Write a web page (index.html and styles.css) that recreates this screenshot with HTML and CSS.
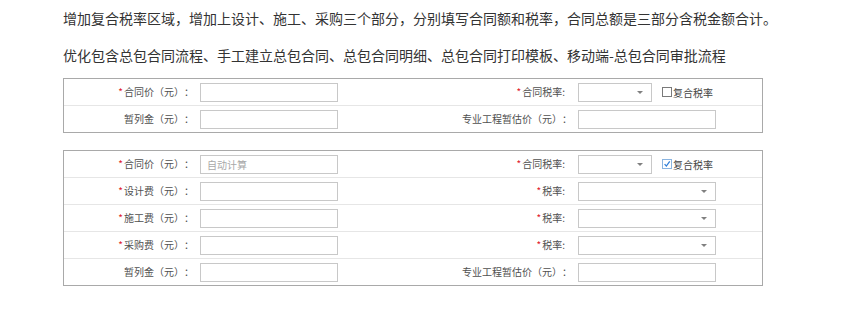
FILE: index.html
```html
<!DOCTYPE html>
<html lang="zh-CN">
<head>
<meta charset="utf-8">
<link rel="stylesheet" href="styles.css">
</head>
<body>
<div class="page">
  <p class="note">增加复合税率区域，增加上设计、施工、采购三个部分，分别填写合同额和税率，合同总额是三部分含税金额合计。</p>
  <p class="note">优化包含总包合同流程、手工建立总包合同、总包合同明细、总包合同打印模板、移动端-总包合同审批流程</p>

  <div class="form">
    <div class="row">
      <div class="label"><span class="req">*</span>合同价（元）：</div>
      <div class="field"><span class="input"></span></div>
      <div class="label half"><span class="req">*</span>合同税率:</div>
      <div class="field"><span class="select small"><span class="arrow"></span></span><span class="check"></span><span class="check-text">复合税率</span></div>
    </div>
    <div class="row">
      <div class="label">暂列金（元）：</div>
      <div class="field"><span class="input"></span></div>
      <div class="label">专业工程暂估价（元）：</div>
      <div class="field"><span class="input"></span></div>
    </div>
  </div>

  <div class="form">
    <div class="row">
      <div class="label"><span class="req">*</span>合同价（元）：</div>
      <div class="field"><span class="input placeholder">自动计算</span></div>
      <div class="label half"><span class="req">*</span>合同税率:</div>
      <div class="field"><span class="select small"><span class="arrow"></span></span><span class="check checked"><svg viewBox="0 0 10 10" width="10" height="10"><path d="M2 5.2 L4.2 7.6 L8.4 1.8" fill="none" stroke="#2f7fd8" stroke-width="1.6"/></svg></span><span class="check-text">复合税率</span></div>
    </div>
    <div class="row">
      <div class="label"><span class="req">*</span>设计费（元）：</div>
      <div class="field"><span class="input"></span></div>
      <div class="label half"><span class="req">*</span>税率:</div>
      <div class="field"><span class="select"><span class="arrow"></span></span></div>
    </div>
    <div class="row">
      <div class="label"><span class="req">*</span>施工费（元）：</div>
      <div class="field"><span class="input"></span></div>
      <div class="label half"><span class="req">*</span>税率:</div>
      <div class="field"><span class="select"><span class="arrow"></span></span></div>
    </div>
    <div class="row">
      <div class="label"><span class="req">*</span>采购费（元）：</div>
      <div class="field"><span class="input"></span></div>
      <div class="label half"><span class="req">*</span>税率:</div>
      <div class="field"><span class="select"><span class="arrow"></span></span></div>
    </div>
    <div class="row">
      <div class="label">暂列金（元）：</div>
      <div class="field"><span class="input"></span></div>
      <div class="label">专业工程暂估价（元）：</div>
      <div class="field"><span class="input"></span></div>
    </div>
  </div>
</div>
</body>
</html>
```

FILE: styles.css
```css
html, body {
  margin: 0;
  padding: 0;
  background: #ffffff;
}
body {
  font-family: "Noto Sans CJK SC", "Noto Sans", sans-serif;
  color: #333333;
  text-spacing-trim: space-all;
}
.page {
  padding: 8px 0 0 63px;
  width: 700px;
}
.note {
  margin: 0 0 17px 0;
  font-size: 14px;
  line-height: 20px;
  color: #333333;
  white-space: nowrap;
}
.note + .note {
  margin-bottom: 13px;
}
.form {
  border: 1px solid #a9a9a9;
  margin-bottom: 17px;
}
.row {
  display: grid;
  grid-template-columns: 136px 140px 238px 1fr;
  height: 26px;
  align-items: center;
  border-top: 1px solid #e6e6e6;
  font-size: 10px;
  color: #505050;
}
.row:first-child {
  border-top: none;
}
.label {
  text-align: right;
  padding-right: 6px;
  white-space: nowrap;
  line-height: 14px;
}
.label.half {
  padding-right: 13px;
}
.req {
  color: #e0202a;
  margin-right: 1px;
}
.field {
  display: flex;
  align-items: center;
}
.input, .select {
  box-sizing: border-box;
  display: flex;
  align-items: center;
  width: 138px;
  height: 19px;
  border: 1px solid #c8c8c8;
  background: #ffffff;
}
.placeholder {
  color: #a8a8a8;
  padding-left: 6px;
  font-size: 10px;
}
.select {
  justify-content: flex-end;
  padding-right: 8px;
}
.select.small {
  width: 74px;
}
.arrow {
  width: 0;
  height: 0;
  border-left: 3px solid transparent;
  border-right: 3px solid transparent;
  border-top: 3px solid #808080;
  margin-top: 1px;
}
.check {
  box-sizing: border-box;
  width: 10px;
  height: 10px;
  border: 1px solid #7a7a7a;
  margin-left: 10px;
  display: flex;
  align-items: center;
  justify-content: center;
}
.check.checked {
  border-color: #8ab4e0;
}
.check svg {
  display: block;
  width: 8px;
  height: 8px;
}
.check-text {
  color: #444444;
  font-size: 10px;
  margin-left: 1px;
}
```
